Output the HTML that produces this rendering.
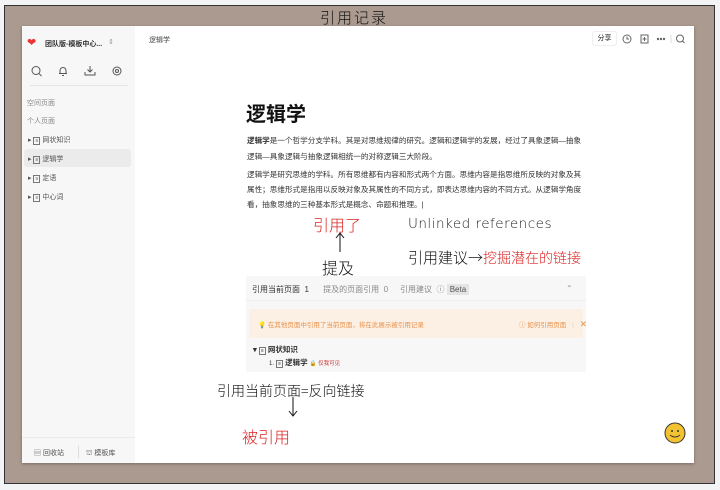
<!DOCTYPE html>
<html><head><meta charset="utf-8"><style>
*{margin:0;padding:0;box-sizing:border-box}
body{width:720px;height:490px;background:#f2f4f6;position:relative;overflow:hidden;font-family:"Liberation Sans","Noto Sans CJK SC",sans-serif;color:#222}
.a{position:absolute;white-space:nowrap}
.frame{position:absolute;left:4px;top:5px;width:711px;height:479px;background:#ab9a8f;border:1.5px solid #333}
.win{position:absolute;left:22px;top:26px;width:672px;height:437px;background:#fff;box-shadow:0 1px 3px rgba(0,0,0,.3)}
.side{position:absolute;left:0;top:0;width:113px;height:437px;background:#f7f7f7}
.s{font-size:7px;color:#555}
.hw{font-family:"WenQuanYi Zen Hei","Noto Sans CJK SC",sans-serif;font-weight:300}
.p{font-size:7.6px;line-height:16px;color:#333}
</style></head><body>
<div class="frame"></div>
<div class="a hw" style="left:320px;top:7px;font-size:15px;letter-spacing:2px;color:#111">引用记录</div>
<div class="win">
 <div class="side">
  <div class="a" style="left:5px;top:10px;font-size:11px;color:#e33">❤</div>
  <div class="a" style="left:23px;top:13px;font-size:7px;font-weight:bold;color:#333">团队版-模板中心...</div>
  <div class="a" style="left:86px;top:12px;font-size:7px;color:#999">⇕</div>
  <svg class="a" style="left:8px;top:39px" width="98" height="12" fill="none" stroke="#555" stroke-width="1">
   <circle cx="6" cy="5.5" r="4"/><path d="M9 8.5l2.5 2.5"/>
   <path d="M29 8.5h8M30 8.5v-3a3 3 0 0 1 6 0v3M32 10.5h2"/>
   <path d="M60 1v6M57.5 4.5l2.5 2.5 2.5-2.5M55 7v3h10v-3"/>
   <circle cx="87" cy="6" r="4"/><circle cx="87" cy="6" r="1.5"/>
  </svg>
  <div class="a" style="left:8px;top:59px;width:98px;height:1px;background:#e5e5e5"></div>
  <div class="a s" style="left:5px;top:72px;color:#888">空间页面</div>
  <div class="a s" style="left:5px;top:90px;color:#888">个人页面</div>
  <div class="a" style="left:2px;top:123px;width:107px;height:18px;background:#ebebeb;border-radius:3px"></div>
  <div class="a s" style="left:6px;top:109px">▸ <span style="border:1px solid #777;font-size:5px;padding:0 1px">≡</span> 网状知识</div>
  <div class="a s" style="left:6px;top:128px">▸ <span style="border:1px solid #777;font-size:5px;padding:0 1px">≡</span> 逻辑学</div>
  <div class="a s" style="left:6px;top:147px">▸ <span style="border:1px solid #777;font-size:5px;padding:0 1px">≡</span> 定语</div>
  <div class="a s" style="left:6px;top:166px">▸ <span style="border:1px solid #777;font-size:5px;padding:0 1px">≡</span> 中心词</div>
  <div class="a" style="left:0;top:411px;width:113px;height:1px;background:#eaeaea"></div>
  <div class="a s" style="left:12px;top:422px">▤ 回收站</div>
  <div class="a" style="left:56px;top:420px;width:1px;height:12px;background:#ddd"></div>
  <div class="a s" style="left:64px;top:422px">⛫ 模板库</div>
 </div>
 <div class="a" style="left:127px;top:9px;font-size:7px;color:#444">逻辑学</div>
 <div class="a" style="left:570px;top:5px;width:25px;height:15px;border:1px solid #eee;border-radius:3px;font-size:7px;text-align:center;line-height:13px">分享</div>
 <svg class="a" style="left:600px;top:7px" width="66" height="12" fill="none" stroke="#666" stroke-width="1">
  <circle cx="5" cy="6" r="4"/><path d="M5 3.5v2.5h2"/>
  <rect x="19" y="2" width="7" height="8"/><path d="M22.5 4v4M20.5 6h4"/>
  <circle cx="36" cy="6" r=".7" fill="#666"/><circle cx="39" cy="6" r=".7" fill="#666"/><circle cx="42" cy="6" r=".7" fill="#666"/>
  <path d="M49 2v8" stroke="#ddd"/>
  <circle cx="58" cy="5.5" r="3.5"/><path d="M60.5 8l2 2"/>
 </svg>
 <div class="a" style="left:224px;top:72px;font-size:20px;font-weight:bold;color:#111">逻辑学</div>
 <div class="a p" style="left:225px;top:107px"><b>逻辑学</b>是一个哲学分支学科。其是对思维规律的研究。逻辑和逻辑学的发展，经过了具象逻辑—抽象<br>逻辑—具象逻辑与抽象逻辑相统一的对称逻辑三大阶段。</div>
 <div class="a p" style="left:225px;top:141px;line-height:15px">逻辑学是研究思维的学科。所有思维都有内容和形式两个方面。思维内容是指思维所反映的对象及其<br>属性；思维形式是指用以反映对象及其属性的不同方式，即表达思维内容的不同方式。从逻辑学角度<br>看，抽象思维的三种基本形式是概念、命题和推理。|</div>
 <div class="a hw" style="left:291px;top:186px;font-size:16px;color:#d22">引用了</div>
 <div class="a" style="left:386px;top:190px;font-size:13.5px;color:#222;font-family:'DejaVu Sans',sans-serif;font-weight:200;letter-spacing:.5px">Unlinked references</div>
 <svg class="a" style="left:312px;top:205px" width="12" height="22" stroke="#111" fill="none"><path d="M6 21V2M2 7l4-5 4 5"/></svg>
 <div class="a hw" style="left:300px;top:229px;font-size:16px;color:#111">提及</div>
 <div class="a hw" style="left:386px;top:221px;font-size:15px;color:#111">引用建议→<span style="color:#d22;font-size:14px">挖掘潜在的链接</span></div>
 <div class="a" style="left:224px;top:250px;width:340px;height:96px;background:#f7f7f7"></div>
 <div class="a" style="left:224px;top:274px;width:340px;height:1px;background:#eee"></div>
 <div class="a" style="left:230px;top:258px;font-size:8px;color:#333">引用当前页面&nbsp; 1 <span style="color:#888;margin-left:12px">提及的页面引用&nbsp; 0</span><span style="color:#888;margin-left:12px">引用建议 &nbsp;ⓘ</span> <span style="background:#e4e4e4;padding:1px 3px;color:#555">Beta</span></div>
 <div class="a" style="left:544px;top:258px;font-size:8px;color:#999">⌃</div>
 <div class="a" style="left:227px;top:283px;width:334px;height:29px;background:#fcefe4"></div>
 <div class="a" style="left:236px;top:293px;font-size:6.5px;color:#e8924a">💡 在其他页面中引用了当前页面，将在此展示被引用记录</div>
 <div class="a" style="left:497px;top:293px;font-size:6.5px;color:#e8924a">ⓘ 如何引用页面 <span style="color:#f0c8a8;margin:0 4px">|</span> <span style="font-size:9px">✕</span></div>
 <div class="a" style="left:231px;top:318px;font-size:7.5px;font-weight:bold;color:#333">▾ <span style="border:1px solid #777;font-size:5px;padding:0 1px;font-weight:normal">≡</span> 网状知识</div>
 <div class="a" style="left:247px;top:331px;font-size:7.5px;font-weight:bold;color:#333"><span style="font-weight:normal;font-size:6px">1.</span> <span style="border:1px solid #777;font-size:5px;padding:0 1px;font-weight:normal">≡</span> 逻辑学 <span style="color:#c33;font-size:5.5px;font-weight:normal">🔒 仅我可见</span></div>
 <div class="a hw" style="left:195px;top:355px;font-size:14px;color:#111">引用当前页面=反向链接</div>
 <svg class="a" style="left:265px;top:370px" width="12" height="22" stroke="#111" fill="none"><path d="M6 1v19M2 15l4 5 4-5"/></svg>
 <div class="a hw" style="left:220px;top:398px;font-size:16px;color:#d22">被引用</div>
 <svg class="a" style="left:640px;top:394px" width="26" height="26"><circle cx="13" cy="13" r="10" fill="#f2c230" stroke="#333" stroke-width="1"/><circle cx="10" cy="11" r="1" fill="#333"/><circle cx="16" cy="11" r="1" fill="#333"/><path d="M8 15q5 4 10 0" stroke="#333" fill="none"/></svg>
</div>
</body></html>
